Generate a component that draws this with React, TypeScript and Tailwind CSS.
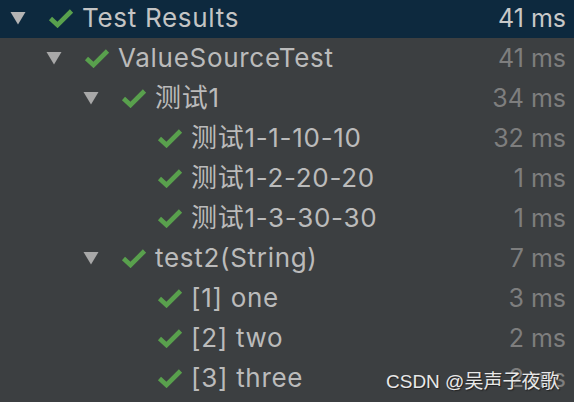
import type { JSX } from 'react'

type Row = {
  level: number
  label: string
  time: string
  open?: boolean
  selected?: boolean
}

const rows: Row[] = [
  { level: 0, label: 'Test Results', time: '41 ms', open: true, selected: true },
  { level: 1, label: 'ValueSourceTest', time: '41 ms', open: true },
  { level: 2, label: '测试1', time: '34 ms', open: true },
  { level: 3, label: '测试1-1-10-10', time: '32 ms' },
  { level: 3, label: '测试1-2-20-20', time: '1 ms' },
  { level: 3, label: '测试1-3-30-30', time: '1 ms' },
  { level: 2, label: 'test2(String)', time: '7 ms', open: true },
  { level: 3, label: '[1] one', time: '3 ms' },
  { level: 3, label: '[2] two', time: '2 ms' },
  { level: 3, label: '[3] three', time: '2 ms' },
]

const indents = ['pl-[10px]', 'pl-[46px]', 'pl-[83px]', 'pl-[119px]']

function Check(): JSX.Element {
  return (
    <svg width="26" height="20" viewBox="0 0 26 20" className="shrink-0">
      <path d="M2.5 10.5 L9.5 17 L23.5 3" fill="none" stroke="#59a04d" strokeWidth="4.6" strokeLinecap="butt" strokeLinejoin="miter" />
    </svg>
  )
}

function Triangle({ light }: { light?: boolean }): JSX.Element {
  return (
    <svg width="16" height="14" viewBox="0 0 16 14" className="shrink-0">
      <path d="M0.5 1 L15.5 1 L8 13.5 Z" fill={light ? '#b4b4b4' : '#a8a8a8'} />
    </svg>
  )
}

export default function App(): JSX.Element {
  return (
    <div className="relative w-[574px] h-[402px] overflow-hidden bg-[#3c3f41] font-['Inter','Noto_Sans_CJK_SC',sans-serif]">
      <div className="-mt-[2px] flex flex-col">
        {rows.map((r, i) => (
          <div
            key={i}
            className={`flex h-[40px] items-center pr-[8px] ${indents[r.level]} ${r.selected ? 'bg-[#0d293e]' : ''}`}
          >
            {r.open ? (
              <div className="flex w-[38px] items-center">
                <Triangle light={r.selected} />
              </div>
            ) : (
              <div className="w-[38px]" />
            )}
            <Check />
            <span
              className={`ml-[8px] text-[26px] leading-none tracking-[0.7px] ${r.selected ? 'text-[#c4c4c4]' : 'text-[#bbbbbb]'}`}
            >
              {r.label}
            </span>
            <span
              className={`ml-auto text-[25px] leading-none tracking-[0px] ${r.selected ? 'text-[#c8c8c8]' : 'text-[#7e7e7e]'}`}
            >
              {r.time}
            </span>
          </div>
        ))}
      </div>
      <div className="absolute left-[386px] top-[372px] text-[19px] leading-none text-[#e8e8e8] [text-shadow:1px_1px_1px_#222] font-['Liberation_Sans','Noto_Sans_CJK_SC',sans-serif]">
        CSDN @吴声子夜歌
      </div>
    </div>
  )
}
